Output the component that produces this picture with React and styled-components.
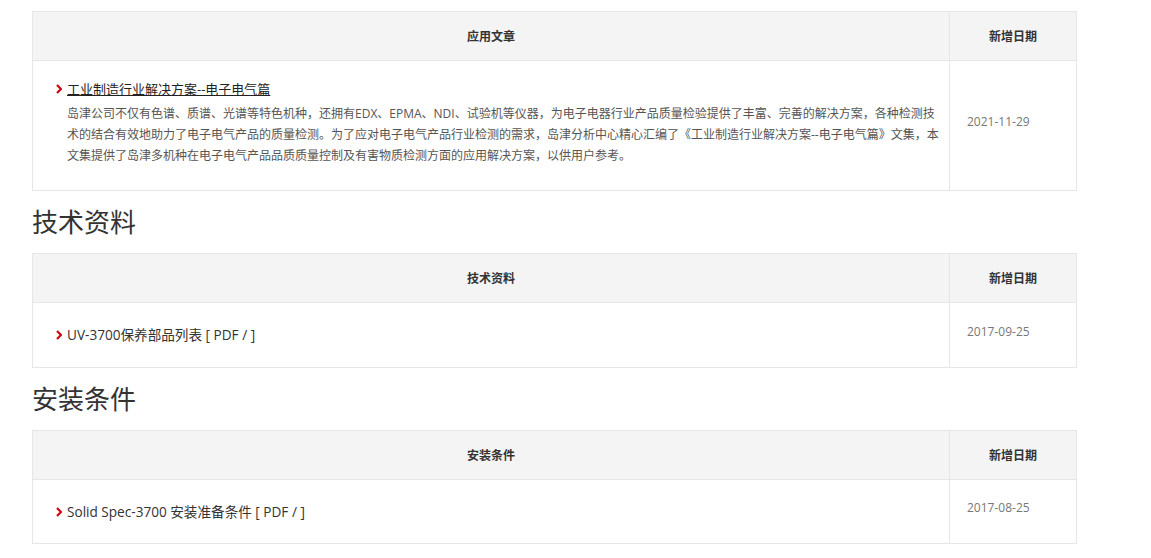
import React from 'react';
import styled, { createGlobalStyle } from 'styled-components';

const GlobalStyle = createGlobalStyle`
  html, body {
    margin: 0;
    padding: 0;
    background: #ffffff;
    font-family: "Open Sans", "Noto Sans CJK SC", sans-serif;
    color: #333;
  }
`;

const Page = styled.div`
  width: 1045px;
  padding: 11px 0 0 32px;
`;

const SectionHeading = styled.h2`
  margin: 12px 0 11px;
  font-size: 26px;
  line-height: 39px;
  font-weight: 400;
  color: #333;
`;

const Table = styled.table`
  width: 100%;
  border-collapse: collapse;
  table-layout: fixed;
`;

const HeadCell = styled.th`
  height: 48px;
  padding: 0;
  background: #f4f4f4;
  border: 1px solid #e6e6e6;
  font-size: 12px;
  font-weight: 700;
  color: #333;
  text-align: center;
  width: ${p => (p.$date ? '126px' : 'auto')};
`;

const BodyCell = styled.td`
  border: 1px solid #e6e6e6;
  vertical-align: middle;
  padding: ${p => (p.$tall ? '19px 8px 24px 23px' : '0 8px 0 23px')};
  height: ${p => (p.$tall ? 'auto' : `${p.$h}px`)};
`;

const DateCell = styled.td`
  border: 1px solid #e6e6e6;
  padding: 0 0 8px 17px;
  font-size: 12px;
  color: #777;
  vertical-align: middle;
`;

const TitleLine = styled.div`
  display: flex;
  align-items: center;
  gap: 5px;
  font-size: ${p => (p.$small ? '13px' : '13.6px')};
  line-height: 18px;
  color: ${p => (p.$small ? '#222' : '#333')};
`;

const TitleText = styled.span`
  text-decoration: ${p => (p.$underline ? 'underline' : 'none')};
`;

const Desc = styled.p`
  margin: 5px 0 0 11px;
  font-size: 12px;
  line-height: 21px;
  color: #555;
`;

const Chevron = () => (
  <svg width="6" height="10" viewBox="0 0 6 10">
    <polyline points="1,1 5,5 1,9" fill="none" stroke="#d7000f" strokeWidth="2.2" />
  </svg>
);

const DocTable = ({ heading, children }) => (
  <Table>
    <thead>
      <tr>
        <HeadCell>{heading}</HeadCell>
        <HeadCell $date>新增日期</HeadCell>
      </tr>
    </thead>
    <tbody>{children}</tbody>
  </Table>
);

const App = () => (
  <>
    <GlobalStyle />
    <Page>
      <DocTable heading="应用文章">
        <tr>
          <BodyCell $tall>
            <TitleLine $small>
              <Chevron />
              <TitleText $underline>工业制造行业解决方案--电子电气篇</TitleText>
            </TitleLine>
            <Desc>
              岛津公司不仅有色谱、质谱、光谱等特色机种，还拥有EDX、EPMA、NDI、试验机等仪器，为电子电器行业产品质量检验提供了丰富、完善的解决方案，各种检测技术的结合有效地助力了电子电气产品的质量检测。为了应对电子电气产品行业检测的需求，岛津分析中心精心汇编了《工业制造行业解决方案--电子电气篇》文集，本文集提供了岛津多机种在电子电气产品品质质量控制及有害物质检测方面的应用解决方案，以供用户参考。
            </Desc>
          </BodyCell>
          <DateCell>2021-11-29</DateCell>
        </tr>
      </DocTable>

      <SectionHeading>技术资料</SectionHeading>
      <DocTable heading="技术资料">
        <tr>
          <BodyCell $h={64}>
            <TitleLine>
              <Chevron />
              <TitleText>UV-3700保养部品列表 [ PDF / ]</TitleText>
            </TitleLine>
          </BodyCell>
          <DateCell>2017-09-25</DateCell>
        </tr>
      </DocTable>

      <SectionHeading>安装条件</SectionHeading>
      <DocTable heading="安装条件">
        <tr>
          <BodyCell $h={63}>
            <TitleLine>
              <Chevron />
              <TitleText>Solid Spec-3700 安装准备条件 [ PDF / ]</TitleText>
            </TitleLine>
          </BodyCell>
          <DateCell>2017-08-25</DateCell>
        </tr>
      </DocTable>
    </Page>
  </>
);

export default App;
